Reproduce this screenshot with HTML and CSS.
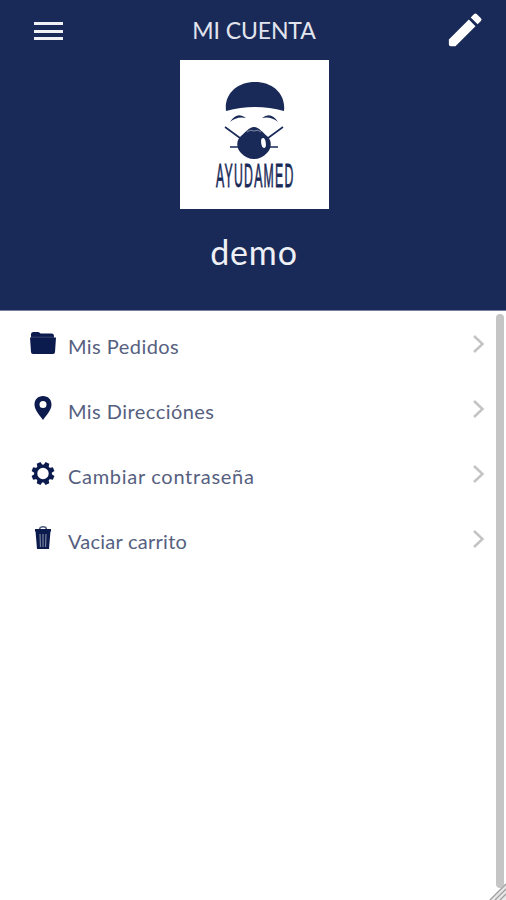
FILE: index.html
```html
<!DOCTYPE html>
<html lang="es">
<head>
    <meta charset="UTF-8">
    <meta name="viewport" content="width=device-width, initial-scale=1.0">
    <title>Mi cuenta</title>
    <link rel="stylesheet" href="styles.css">
</head>
<body>
    <header class="header">
        <div class="toolbar">
            <button class="menu-button" aria-label="Menu">
                <span></span>
                <span></span>
                <span></span>
            </button>
            <h1>MI CUENTA</h1>
            <button class="edit-button" aria-label="Editar">
                <svg width="44" height="44" viewBox="0 0 24 24" fill="#fff">
                    <path d="M3.200 17.200V19.800Q3.200 20.800 4.200 20.800H6.800L17.700 9.900L14.100 6.300L3.200 17.200zM20.700 7.040a1 1 0 0 0 0-1.410l-2.340-2.340a1 1 0 0 0-1.410 0l-1.830 1.830 3.750 3.750 1.830-1.830z"/>
                </svg>
            </button>
        </div>
        <div class="logo">
            <svg width="149" height="149" viewBox="0 0 149 149" fill="#1a2a58">
                <!-- cap -->
                <path d="M46 51C44 34 57 22 75 22C93 22 106 34 104 51Q75 43 46 51Z"/>
                <!-- eyebrows -->
                <path d="M50 62Q57 51 66 58Q57 56 50 62ZM98 62Q91 51 82 58Q91 56 98 62Z"/>
                <!-- straps -->
                <path d="M45 67L60 78M103 67L88 78M50 87H60M98 87H88" stroke="#1a2a58" stroke-width="1.6"/>
                <!-- mask -->
                <path d="M74 67C79 67 83 73 87 76C92 80 92 88 87 93C83 97 79 99 74 99C69 99 65 97 61 93C56 88 56 80 61 76C65 73 69 67 74 67Z"/>
                <path d="M67 72Q70 69 74 71Q78 69 81 72" fill="none" stroke="#fff" stroke-width="1" opacity=".45"/>
                <ellipse cx="83.500" cy="83" rx="2.300" ry="5" fill="#fff" transform="rotate(-8 83.500 83)"/>
                <text class="logo-text" transform="translate(36 127) scale(.36 1)">AYUDAMED</text>
            </svg>
        </div>
        <h2>demo</h2>
    </header>

    <main class="content">
        <ul class="options">
            <li class="option">
                <svg class="icon" width="28" height="28" viewBox="0 0 28 28">
                    <path d="M2 6.800V4.500Q2 2 4.500 2H9Q10.500 2 11.500 3.500H23Q25 3.500 25 6V6.800Z"/>
                    <path d="M2 6H25V9H2Z" opacity=".75"/>
                    <path d="M1 7.500H27L26 22Q26 24 24 24H4Q2 24 2 22Z"/>
                </svg>
                <span class="label pedidos">Mis Pedidos</span>
                <svg class="arrow" width="14" height="20" viewBox="0 0 14 20"><path d="M2 2L10.500 10L2 18"/></svg>
            </li>
            <li class="option">
                <svg class="icon" width="28" height="28" viewBox="0 0 28 28">
                    <path fill-rule="evenodd" d="M14 1C9 1 5.500 4.500 5.500 9.500C5.500 15.500 11 20.500 14 25C17 20.500 22.500 15.500 22.500 9.500C22.500 4.500 19 1 14 1ZM14 6A3.500 3.500 0 1 1 14 13A3.500 3.500 0 0 1 14 6Z"/>
                </svg>
                <span class="label direcciones">Mis Direcciónes</span>
                <svg class="arrow" width="14" height="20" viewBox="0 0 14 20"><path d="M2 2L10.500 10L2 18"/></svg>
            </li>
            <li class="option">
                <svg class="icon" width="28" height="28" viewBox="0 0 28 28">
                    <circle cx="14" cy="13.500" r="7.300" fill="none" stroke="#0c1b4d" stroke-width="3.200"/>
                    <path d="M11 7L12 2H16L17 7Z" transform="rotate(22.500 14 13.500)"/>
                    <path d="M11 7L12 2H16L17 7Z" transform="rotate(67.500 14 13.500)"/>
                    <path d="M11 7L12 2H16L17 7Z" transform="rotate(112.500 14 13.500)"/>
                    <path d="M11 7L12 2H16L17 7Z" transform="rotate(157.500 14 13.500)"/>
                    <path d="M11 7L12 2H16L17 7Z" transform="rotate(202.500 14 13.500)"/>
                    <path d="M11 7L12 2H16L17 7Z" transform="rotate(247.500 14 13.500)"/>
                    <path d="M11 7L12 2H16L17 7Z" transform="rotate(292.500 14 13.500)"/>
                    <path d="M11 7L12 2H16L17 7Z" transform="rotate(337.500 14 13.500)"/>
                </svg>
                <span class="label contrasena">Cambiar contraseña</span>
                <svg class="arrow" width="14" height="20" viewBox="0 0 14 20"><path d="M2 2L10.500 10L2 18"/></svg>
            </li>
            <li class="option">
                <svg class="icon" width="28" height="28" viewBox="0 0 28 28">
                    <path d="M10.500 4.500Q10.500 1.800 14 1.800Q17.500 1.800 17.500 4.500" fill="none" stroke="#52607f" stroke-width="1.500"/>
                    <path d="M6 4H22V6.500H6ZM6.500 6H21.500L20 24H8Z"/>
                    <path d="M11 9L11.500 22M14 9V22M17 9L16.500 22" stroke="#77829e" stroke-width="1.200"/>
                </svg>
                <span class="label carrito">Vaciar carrito</span>
                <svg class="arrow" width="14" height="20" viewBox="0 0 14 20"><path d="M2 2L10.500 10L2 18"/></svg>
            </li>
        </ul>
        <div class="scrollbar"></div>
        <svg class="resizer" width="17" height="17" viewBox="0 0 17 17">
            <path d="M0 17L17 0V17Z" fill="#e8e8e8"/>
            <path d="M1 17L17 1M6 17L17 6M11 17L17 11" stroke="#a0a0a0" stroke-width="1.300"/>
        </svg>
    </main>
</body>
</html>
```

FILE: styles.css
```css
* {
  margin: 0;
  padding: 0;
  box-sizing: border-box;
}

body {
  height: 900px;
  overflow: hidden;
  display: flex;
  flex-direction: column;
  font-family: "Lato", "Open Sans", sans-serif;
  background-color: white;
}

button {
  border: none;
  background: none;
}

/* Blue area with the toolbar, logo and user name */
.header {
  height: 311px;
  flex-shrink: 0;
  display: flex;
  flex-direction: column;
  align-items: center;
  color: white;
  background-color: #1a2a58;
  border-bottom: 1px solid #777fa0;
}

.toolbar {
  width: 100%;
  height: 60px;
  display: grid;
  grid-template-columns: 63px 1fr 63px;
  align-items: center;
}

.menu-button {
  width: 29px;
  height: 18px;
  margin: 2px 0 0 34px;
  display: flex;
  flex-direction: column;
  justify-content: space-between;
}

.menu-button span {
  height: 3px;
  background-color: #f0f1f5;
}

.toolbar h1 {
  padding-left: 2px;
  font-size: 23px;
  font-weight: 400;
  line-height: 30px;
  letter-spacing: -0.1px;
  text-align: center;
  color: #e2e5ee;
}

.edit-button {
  width: 44px;
  height: 44px;
}

.logo {
  width: 149px;
  height: 149px;
  margin-left: 2px;
  background-color: white;
}

.logo svg {
  display: block;
}

.logo-text {
  font-family: "Liberation Sans", Arial, sans-serif;
  font-size: 34px;
  letter-spacing: 3.5px;
  stroke: #1a2a58;
  stroke-width: 0.8px;
}

.header h2 {
  margin-top: 21px;
  padding-left: 2px;
  font-size: 34px;
  font-weight: 400;
  line-height: 44px;
  letter-spacing: 0.8px;
  color: #eef0f5;
}

/* Options list */
.content {
  position: relative;
  flex: 1;
  display: flex;
}

.options {
  flex: 1;
  list-style: none;
}

.option {
  height: 65px;
  display: flex;
  align-items: center;
  padding: 0 10px 0 29px;
}

.icon {
  flex-shrink: 0;
  fill: #0c1b4d;
}

.label {
  flex: 1;
  margin: 5px 0 0 11px;
  font-size: 20px;
  line-height: 28px;
  letter-spacing: 0.45px;
  color: #566080;
}

.contrasena {
  letter-spacing: 0.7px;
}

.carrito {
  letter-spacing: 0.25px;
}

.arrow {
  fill: none;
  stroke: #c4c4c4;
  stroke-width: 2.5;
}

.scrollbar {
  width: 8px;
  margin: 3px 2px 12px 0;
  border-radius: 4px;
  background-color: #c5c5c5;
}

.resizer {
  position: absolute;
  right: 0;
  bottom: 0;
}
```
